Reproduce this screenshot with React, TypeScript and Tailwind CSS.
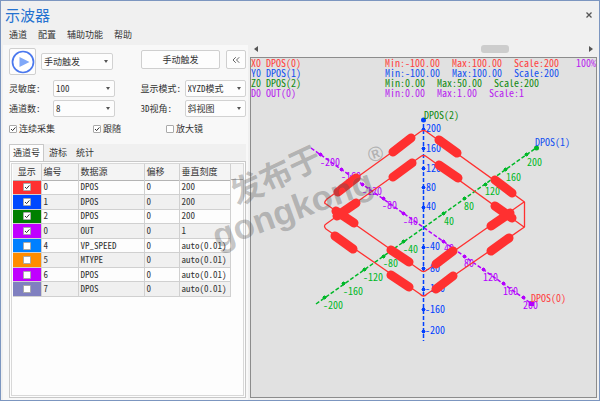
import { useState } from "react";
import { ChevronsLeft } from "lucide-react";

const MENUS = ["通道", "配置", "辅助功能", "帮助"];
const TABS = ["通道号", "游标", "统计"];

const CHANNELS = [
  { color: "bg-[#ff3030]", on: true, id: "0", source: "DPOS", offset: "0", scale: "200" },
  { color: "bg-[#0048ff]", on: true, id: "1", source: "DPOS", offset: "0", scale: "200" },
  { color: "bg-[#008000]", on: true, id: "2", source: "DPOS", offset: "0", scale: "200" },
  { color: "bg-[#c000ff]", on: true, id: "0", source: "OUT", offset: "0", scale: "1" },
  { color: "bg-[#0080ff]", on: false, id: "4", source: "VP_SPEED", offset: "0", scale: "auto(0.01)" },
  { color: "bg-[#ff8c00]", on: false, id: "5", source: "MTYPE", offset: "0", scale: "auto(0.01)" },
  { color: "bg-[#c000ff]", on: false, id: "6", source: "DPOS", offset: "0", scale: "auto(0.01)" },
  { color: "bg-[#8080c0]", on: false, id: "7", source: "DPOS", offset: "0", scale: "auto(0.01)" },
];

const LEGEND = [
  { cls: "text-[#ff4040]", name: "X0 DPOS(0)", stats: ["Min:-100.00", "Max:100.00", "Scale:200"] },
  { cls: "text-[#1450f0]", name: "Y0 DPOS(1)", stats: ["Min:-100.00", "Max:100.00", "Scale:200"] },
  { cls: "text-[#128a12]", name: "Z0 DPOS(2)", stats: ["Min:0.00", "Max:50.00", "Scale:200"] },
  { cls: "text-[#b81cf0]", name: "D0 OUT(0)", stats: ["Min:0.00", "Max:1.00", "Scale:1"] },
];

// [label, x, y] of every tick, then the label's own place
type Tick = [string, number, number, number, number];

const X_TICKS: Tick[] = [
  ["-200", 320, 154, 320, 166],
  ["-160", 341, 169, 341, 180],
  ["-120", 362, 184, 362, 195],
  ["-80", 383, 198, 382, 209],
  ["-40", 403, 213, 403, 225],
  ["40", 443, 241, 444, 252],
  ["80", 464, 256, 464, 267],
  ["120", 483, 269, 483, 281],
  ["160", 503, 283, 503, 295],
  ["200", 523, 297, 523, 309],
];
const Y_TICKS: Tick[] = [
  ["-200", 324, 297, 323, 309],
  ["-160", 343, 283, 343, 295],
  ["-120", 364, 269, 363, 281],
  ["-80", 383, 256, 383, 267],
  ["-40", 403, 241, 403, 253],
  ["40", 443, 213, 444, 225],
  ["80", 464, 198, 464, 210],
  ["120", 485, 184, 485, 195],
  ["160", 505, 169, 506, 181],
  ["200", 526, 154, 527, 166],
];
const Z_TICKS: Tick[] = [
  ["200", 423, 129, 426, 132],
  ["160", 423, 148, 426, 152],
  ["120", 423, 168, 426, 172],
  ["80", 423, 187, 426, 191],
  ["40", 423, 207, 426, 210],
  ["-40", 423, 247, 425, 250],
  ["-80", 423, 268, 425, 272],
  ["-120", 423, 289, 425, 292],
  ["-160", 423, 309, 425, 313],
  ["-200", 423, 331, 425, 334],
];

// stretches where OUT(0) is on
const PULSES =
  "M393 152L411 138 M393 177L412 163 M338 192L356 178 M337 216L356 203 M336 211L354 223 " +
  "M439 140L457 153 M439 165L458 178 M495 180L512 193 M495 206L512 218 M491 226L510 213 " +
  "M335 236L353 249 M391 250L409 262 M391 275L409 287 M436 264L453 251 M436 289L453 276 M491 251L509 238";

const SELECT_TEXT = "h-[17px] w-full appearance-none rounded-[2px] border border-[#d2d2d2] bg-[#fdfdfd] pl-[2px] pr-3 text-[9px] leading-[15px] text-[#333]";

function Dropdown({ label, id, value }: { label: string; id: string; value: string }) {
  return (
    <div className="relative w-full">
      <select id={id} aria-label={label} defaultValue={value} className={SELECT_TEXT}>
        <option>{value}</option>
      </select>
      <svg viewBox="0 0 4 3" className="pointer-events-none absolute right-[5px] top-[7px] h-[3px] w-1">
        <path d="M0 0h4L2 3z" fill="#555" />
      </svg>
    </div>
  );
}

function Field({ label, id, value }: { label: string; id: string; value: string }) {
  return (
    <div className="grid grid-cols-[44px_1fr] items-center">
      <label htmlFor={id} className="whitespace-nowrap">{label}:</label>
      <Dropdown label={label} id={id} value={value} />
    </div>
  );
}

function Check({ label, checked, onChange }: { label?: string; checked: boolean; onChange: () => void }) {
  return (
    <label className="inline-flex items-center gap-[2px]">
      <span className="relative inline-flex">
        <input
          type="checkbox"
          checked={checked}
          onChange={onChange}
          aria-label={label ?? "显示"}
          className="size-2 appearance-none rounded-[1px] border border-[#aaa] bg-white"
        />
        {checked && (
          <svg viewBox="0 0 8 8" className="pointer-events-none absolute inset-0 size-2" fill="none">
            <path d="M2 4l1.6 1.6L6.4 2.4" stroke="#333" strokeWidth="1" />
          </svg>
        )}
      </span>
      {label}
    </label>
  );
}

function Axis({ ticks, color, path }: { ticks: Tick[]; color: string; path: string }) {
  return (
    <g fill={color}>
      <path d={path} stroke={color} strokeWidth="1.5" strokeDasharray="4 2" fill="none" />
      {ticks.map(([text, x, y, tx, ty]) => (
        <g key={text}>
          <rect x={x - 1} y={y - 1} width="3" height="3" />
          <path d={`M${x - 1.5} ${y + 0.5}h4M${x + 0.5} ${y - 1.5}v4`} stroke={color} />
          <text x={tx} y={ty}>{text}</text>
        </g>
      ))}
    </g>
  );
}

function Plot() {
  return (
    <svg viewBox="251 58 345 339" className="absolute inset-0 size-full text-[10px]">
      <Axis ticks={X_TICKS} color="#b400ff" path="M311 148L532 304" />
      <Axis ticks={Y_TICKS} color="#00b828" path="M316 304L536 148" />
      <Axis ticks={Z_TICKS} color="#0040ff" path="M423.5 118V341" />
      <circle cx="423.5" cy="120" r="2.5" fill="#0040ff" />
      <rect x="529" y="302" width="5" height="4" fill="#b400ff" />
      <circle cx="536.5" cy="148" r="2.5" fill="#00b828" />
      <text x="424" y="119" fill="#128a12">DPOS(2)</text>
      <text x="535" y="146" fill="#1450f0">DPOS(1)</text>
      <text x="531" y="302" fill="#ff4040">DPOS(0)</text>
      <g fill="none" stroke="#ff3030" strokeWidth="1.3" strokeLinejoin="round">
        <path d="M420 132Q423.5 129 427 132L524.5 202V227L427 294Q423.5 298 420 294L326 229Q323 226 326 224L420 157Q423.5 154 427 157L524 227" />
        <path d="M420 132L327 199Q323 203 326 204L420 270Q423.5 273 427 270L524 202" />
        <path d={PULSES} strokeWidth="9" strokeLinecap="round" />
      </g>
    </svg>
  );
}

function Watermark() {
  return (
    <svg
      viewBox="0 0 600 401"
      className="pointer-events-none absolute inset-0 size-full font-['Liberation_Sans','Noto_Sans_CJK_SC',sans-serif] font-bold"
      fill="#505050"
      fillOpacity="0.32"
    >
      <text transform="translate(237 206) rotate(-25)" fontSize="32">发布于</text>
      <text transform="translate(217 249) rotate(-20)" fontSize="35">gongkong</text>
      <text transform="translate(371 163) rotate(-20)" fontSize="21">®</text>
    </svg>
  );
}

export default function App() {
  const [tab, setTab] = useState(0);
  const [shown, setShown] = useState(CHANNELS.map((c) => c.on));
  const [options, setOptions] = useState([true, true, false]);

  const flip = (list: boolean[], at: number) => list.map((v, i) => (i === at ? !v : v));

  return (
    <div className="relative flex h-screen flex-col overflow-hidden border border-[#7c96c0] bg-[#f0f0f0] font-['Noto_Sans_Mono_CJK_SC','Noto_Sans_CJK_SC',monospace] text-[9px] leading-3 text-[#333]">
      {/* title and menu */}
      <header className="h-11 shrink-0 px-1">
        <div className="flex h-7 items-center justify-between">
          <h1 className="text-[15px] leading-5 text-[#2472d0]">示波器</h1>
          <button aria-label="关闭" className="mr-[2px] p-[1px]">
            <svg viewBox="0 0 6 6" className="size-[6px]">
              <path d="M.5 .5l5 5M5.5 .5l-5 5" stroke="#555" strokeWidth="1.3" />
            </svg>
          </button>
        </div>
        <nav className="flex gap-[11px] px-1">
          {MENUS.map((m) => (
            <button key={m}>{m}</button>
          ))}
        </nav>
      </header>

      <div className="flex min-h-0 flex-1">
        {/* control panel */}
        <aside className="ml-[2px] flex w-[245px] shrink-0 flex-col bg-[#f8f8f8] pb-[2px] pl-[6px] pr-[2px]">
          <div className="flex items-center pt-[3px]">
            <div className="flex flex-1 items-center gap-[5px]">
              <button aria-label="启动" className="grid size-[27px] shrink-0 place-items-center rounded-[2px] border border-[#cfcfcf] bg-[#fdfdfd]">
                <svg viewBox="0 0 24 24" className="size-6">
                  <circle cx="12" cy="12" r="10.5" fill="#fff" stroke="#4a78ee" strokeWidth="1.7" />
                  <path d="M8.5 7l10 5-10 5z" fill="#80a8f8" />
                </svg>
              </button>
              <div className="flex w-[72px]">
                <Dropdown label="触发方式" id="trigger" value="手动触发" />
              </div>
            </div>
            <div className="mb-1 ml-[26px] flex w-[105px] gap-[6px]">
              <button className="h-[19px] flex-1 rounded-[2px] border border-[#cfcfcf] bg-[#fdfdfd]">手动触发</button>
              <button aria-label="收起" className="grid h-[19px] w-5 place-items-center rounded-[2px] border border-[#cfcfcf] bg-[#fdfdfd]">
                <ChevronsLeft className="size-3" strokeWidth={1.5} />
              </button>
            </div>
          </div>

          <div className="mt-[5px] grid grid-cols-2 gap-x-[26px] gap-y-[3px]">
            <Field label="灵敏度" id="gain" value="100" />
            <Field label="显示模式" id="mode" value="XYZD模式" />
            <Field label="通道数" id="count" value="8" />
            <Field label="3D视角" id="view" value="斜视图" />
          </div>

          <div className="mt-[6px] grid grid-cols-[84px_73px_1fr]">
            {["连续采集", "跟随", "放大镜"].map((name, i) => (
              <Check key={name} label={name} checked={options[i]} onChange={() => setOptions(flip(options, i))} />
            ))}
          </div>

          {/* tabs */}
          <div role="tablist" className="mt-[9px] flex h-[17px] shrink-0 bg-[#f0f0f0]">
            {TABS.map((name, i) => (
              <button
                key={name}
                role="tab"
                aria-selected={tab === i}
                onClick={() => setTab(i)}
                className={tab === i ? "rounded-t-[1px] border border-b-0 border-[#c8c8c8] bg-[#fdfdfd] px-[3px]" : "pl-[5px] pr-1"}
              >
                {name}
              </button>
            ))}
          </div>

          <div className="min-h-0 flex-1 border border-[#c8c8c8] bg-[#fdfdfd] p-[1px]">
            <div className="h-full border border-[#d8d8d8] pl-[1px]">
              <div className="flex h-[133px]">
                <table className="w-[218px] table-fixed border-collapse text-left">
                  <thead>
                    <tr className="h-4 border-b border-[#b4b4b4] bg-[#f4f4f4]">
                      <th className="w-7 p-0 text-center font-normal">显示</th>
                      <th className="w-[37px] border-l border-[#d0d0d0] p-0 pl-[2px] font-normal">编号</th>
                      <th className="w-[66px] border-l border-[#d0d0d0] p-0 pl-[2px] font-normal">数据源</th>
                      <th className="w-[35px] border-l border-[#d0d0d0] p-0 pl-[2px] font-normal">偏移</th>
                      <th className="border-x border-[#d0d0d0] p-0 pl-[2px] font-normal">垂直刻度</th>
                    </tr>
                  </thead>
                  <tbody>
                    {CHANNELS.map((c, i) => (
                      <tr key={i} className="border-b border-[#d0d0d0] odd:bg-[#fdfdfd] even:bg-[#f0f0f0]">
                        <td className={`p-0 text-center ${c.color}`}>
                          <div className="flex justify-center">
                            <Check checked={shown[i]} onChange={() => setShown(flip(shown, i))} />
                          </div>
                        </td>
                        <td className="border-l border-[#d0d0d0] p-0 pl-[2px]">{c.id}</td>
                        <td className="border-l border-[#d0d0d0] p-0 pl-[2px]">{c.source}</td>
                        <td className="border-l border-[#d0d0d0] p-0 pl-[2px]">{c.offset}</td>
                        <td className="border-x border-[#d0d0d0] p-0 pl-[2px]">{c.scale}</td>
                      </tr>
                    ))}
                  </tbody>
                </table>
                <div className="h-4 flex-1 border-b border-[#b4b4b4] bg-[#f4f4f4]" />
              </div>
            </div>
          </div>
        </aside>

        {/* scope */}
        <main className="flex min-w-0 flex-1 flex-col pb-[2px] pl-[2px] pr-[2px]">
          <div className="flex h-3 shrink-0 items-start justify-between px-1">
            <svg viewBox="0 0 4 6" className="mt-[1px] h-[6px] w-1"><path d="M4 0v6L0 3z" fill="#555" /></svg>
            <div className="flex flex-1 justify-end pr-20">
              <div className="h-2 w-7 rounded-[3px] bg-[#cdcdcd]" />
            </div>
            <svg viewBox="0 0 4 6" className="mt-[1px] h-[6px] w-1"><path d="M0 0v6l4-3z" fill="#555" /></svg>
          </div>

          <section className="relative flex-1 border border-[#8c8c8c] bg-[#e1e1e1] text-[10px] leading-[10px]">
            <Plot />
            <div className="relative flex">
              <div className="w-[134px]">
                {LEGEND.map((l) => (
                  <div key={l.name} className={l.cls}>{l.name}</div>
                ))}
              </div>
              <div className="flex-1">
                {LEGEND.map((l) => (
                  <div key={l.name} className={`flex gap-3 ${l.cls}`}>
                    {l.stats.map((s) => (
                      <span key={s}>{s}</span>
                    ))}
                  </div>
                ))}
              </div>
              <div className="text-[#b81cf0]">100%</div>
            </div>
          </section>
        </main>
      </div>

      <Watermark />
    </div>
  );
}
